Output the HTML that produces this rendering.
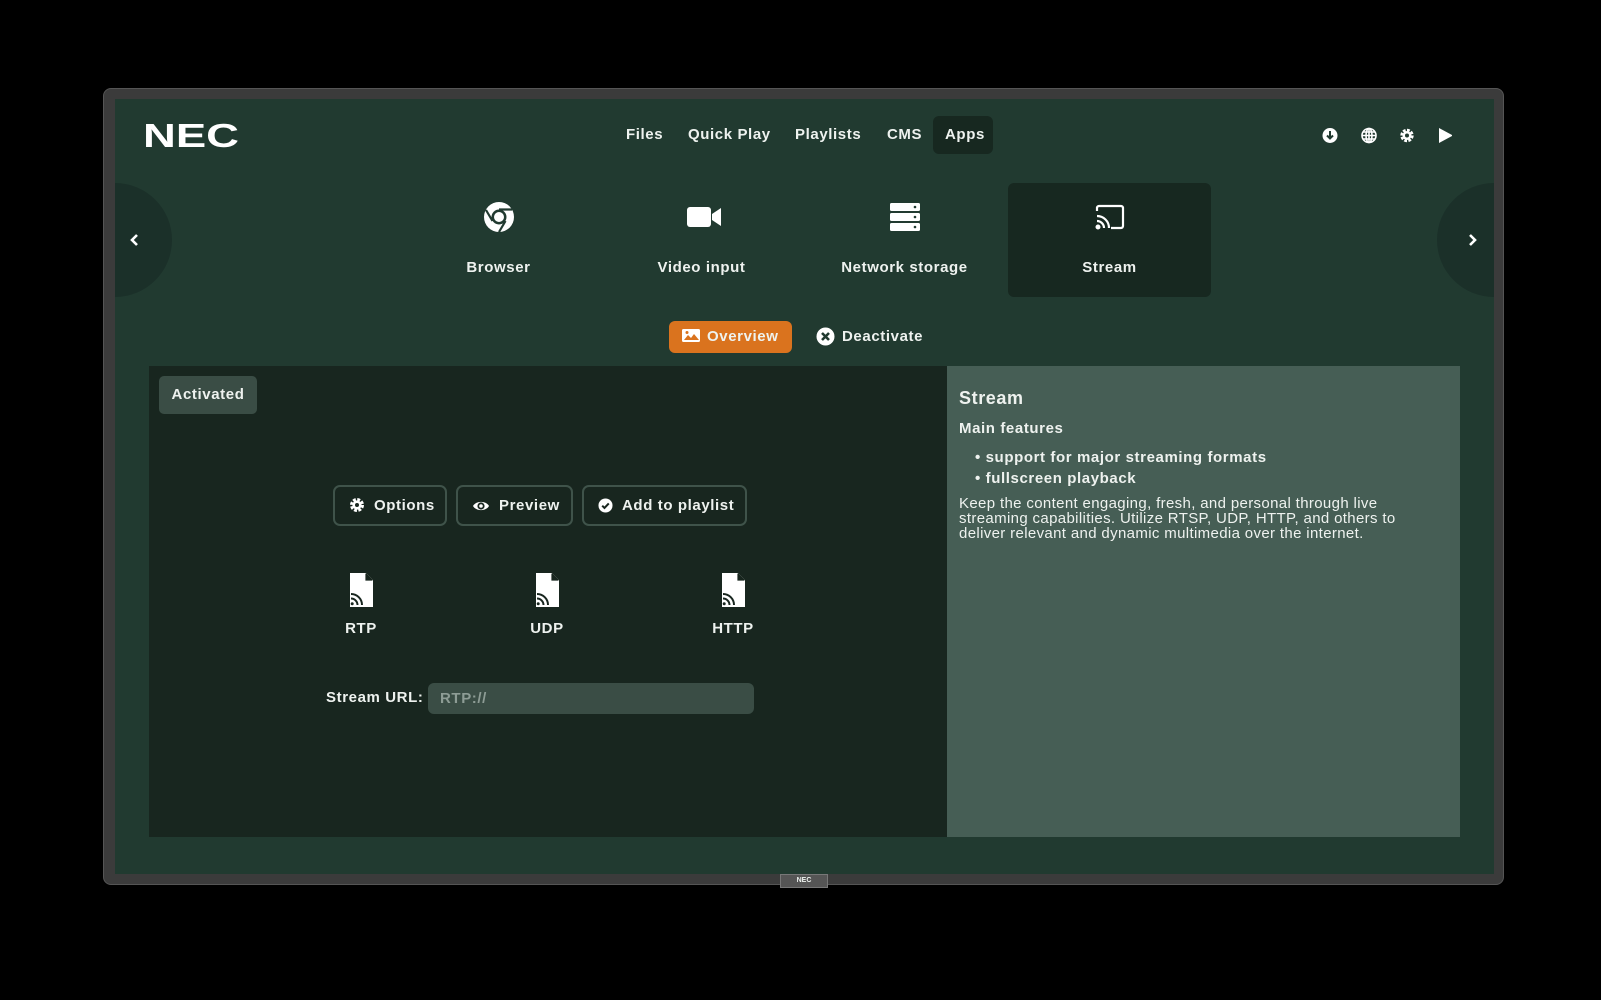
<!DOCTYPE html>
<html><head><meta charset="utf-8"><style>
*{margin:0;padding:0;box-sizing:border-box}
body{width:1601px;height:1000px;background:#000;position:relative;overflow:hidden;font-family:"Liberation Sans",sans-serif;color:#eef2ef;font-weight:bold;letter-spacing:.6px}
.abs{position:absolute}
#frame{left:103px;top:88px;width:1401px;height:797px;background:#3b3b3b;border-radius:8px;border:1px solid #555}
#screen{left:115px;top:99px;width:1379px;height:775px;background:#213a30;overflow:hidden}
.nav{top:124px;font-size:15px;height:22px;line-height:22px}
.circ{width:114px;height:114px;border-radius:50%;background:#1b3029;top:84px;position:absolute}
.tile{top:183px;width:203px;height:114px;text-align:center;border-radius:6px}
.tile svg{position:absolute;left:86px;top:18px}
.tile span{position:absolute;left:0;right:0;top:76px;font-size:15px}
.btn{top:485px;height:41px;border:2px solid #3f534a;border-radius:7px;font-size:15px;line-height:37px;padding-left:14px}
.btn svg{vertical-align:-3px;margin-right:9px}
.fi{top:573px;width:60px;text-align:center;font-size:15px}
.fi span{display:block;margin-top:9px}
</style></head><body>
<div id="frame" class="abs"></div>
<div class="abs" style="left:780px;top:874px;width:48px;height:14px;background:#555;border:1px solid #777;font-size:7px;line-height:12px;text-align:center;letter-spacing:0">NEC</div>
<div id="screen" class="abs"><div class="circ" style="left:-57px"></div><div class="circ" style="left:1322px"></div></div>

<svg class="abs" style="left:143px;top:122px" width="98" height="27"><text x="0" y="25" font-family="Liberation Sans" font-weight="bold" font-size="33" fill="#fff" textLength="96" lengthAdjust="spacingAndGlyphs" letter-spacing="0">NEC</text></svg>

<div class="abs nav" style="left:626px">Files</div>
<div class="abs nav" style="left:688px">Quick Play</div>
<div class="abs nav" style="left:795px">Playlists</div>
<div class="abs nav" style="left:887px">CMS</div>
<div class="abs" style="left:933px;top:116px;width:60px;height:38px;background:#172820;border-radius:6px"></div>
<div class="abs nav" style="left:945px">Apps</div>

<svg class="abs" style="left:1322px;top:127px" width="130" height="17" viewBox="0 0 130 17">
<circle cx="8" cy="8.5" r="7.5" fill="#fff"/><path d="M8 4v7M5 8.5l3 3 3-3" stroke="#213a30" stroke-width="2" fill="none"/>
<g transform="translate(47 8.5)" fill="none" stroke="#fff" stroke-width="1.6"><circle r="7"/><ellipse rx="3" ry="7"/><path d="M-7 0h14M-6-3.5h12M-6 3.5h12M0-7v14"/></g>
<g transform="translate(85 8.5)"><circle r="5" fill="none" stroke="#fff" stroke-width="3.4" stroke-dasharray="2.6 1.3"/><circle r="4.5" fill="#fff"/><circle r="2" fill="#213a30"/></g>
<path d="M117 1l14 7.5-14 7.5z" fill="#fff"/>
</svg>

<svg class="abs" style="left:130px;top:233px" width="10" height="14"><path d="M7 2L2 7l5 5" stroke="#fff" stroke-width="2.6" fill="none"/></svg>
<svg class="abs" style="left:1467px;top:233px" width="10" height="14"><path d="M3 2l5 5-5 5" stroke="#fff" stroke-width="2.6" fill="none"/></svg>

<div class="abs tile" style="left:397px"><svg width="32" height="32" viewBox="0 0 32 32"><circle cx="16" cy="16" r="15" fill="#fff"/><circle cx="16" cy="16" r="7.5" fill="#213a30"/><circle cx="16" cy="16" r="5" fill="#fff"/><path d="M16 8.5h13M9.5 20L3 9M22.5 20L16 31" stroke="#213a30" stroke-width="2.2"/></svg><span>Browser</span></div>
<div class="abs tile" style="left:600px"><svg width="36" height="32" viewBox="0 0 36 32"><rect x="1" y="6" width="24" height="20" rx="3" fill="#fff"/><path d="M26 13l9-6v18l-9-6z" fill="#fff"/></svg><span>Video input</span></div>
<div class="abs tile" style="left:803px"><svg width="32" height="32" viewBox="0 0 32 32" fill="#fff"><rect x="1" y="2" width="30" height="8" rx="1.5"/><rect x="1" y="12" width="30" height="8" rx="1.5"/><rect x="1" y="22" width="30" height="8" rx="1.5"/><g fill="#213a30"><circle cx="26" cy="6" r="1.3"/><circle cx="26" cy="16" r="1.3"/><circle cx="26" cy="26" r="1.3"/></g></svg><span>Network storage</span></div>
<div class="abs tile" style="left:1008px;background:#172820"><svg width="32" height="32" viewBox="0 0 32 32" fill="none" stroke="#fff" stroke-width="2.2"><path d="M3 10V7a2 2 0 012-2h22a2 2 0 012 2v18a2 2 0 01-2 2H17"/><path d="M3 15a12 12 0 0112 12M3 20a7 7 0 017 7"/><circle cx="4" cy="26" r="1.4" fill="#fff"/></svg><span>Stream</span></div>

<div class="abs" style="left:669px;top:321px;width:123px;height:32px;background:#da731e;border-radius:6px;font-size:15px;line-height:32px;padding-left:12px"><svg width="20" height="15" viewBox="0 0 20 15" style="vertical-align:-2px;margin-right:6px"><rect x="1" y="1" width="18" height="13" rx="1.5" fill="#fff"/><path d="M3 12l4-5 3 3 3-4 5 6z" fill="#da731e"/><circle cx="6" cy="4.5" r="1.5" fill="#da731e"/></svg>Overview</div>
<svg class="abs" style="left:816px;top:327px" width="19" height="19"><circle cx="9.5" cy="9.5" r="9" fill="#fff"/><path d="M6 6l7 7M13 6l-7 7" stroke="#213a30" stroke-width="2.6"/></svg>
<div class="abs" style="left:842px;top:328px;font-size:15px">Deactivate</div>

<div class="abs" style="left:149px;top:366px;width:798px;height:471px;background:#18261f"></div>
<div class="abs" style="left:947px;top:366px;width:513px;height:471px;background:#465e55"></div>

<div class="abs" style="left:159px;top:376px;width:98px;height:38px;background:#3a4d45;border-radius:5px;font-size:15px;line-height:38px;text-align:center">Activated</div>

<div class="abs btn" style="left:333px;width:114px"><svg width="16" height="16" viewBox="-8 -8 16 16"><circle r="5.2" fill="none" stroke="#fff" stroke-width="3.6" stroke-dasharray="2.7 1.4"/><circle r="4.6" fill="#fff"/><circle r="2" fill="#18261f"/></svg>Options</div>
<div class="abs btn" style="left:456px;width:117px"><svg width="18" height="14" viewBox="0 0 18 14"><path d="M1 7C4 1.5 14 1.5 17 7 14 12.5 4 12.5 1 7z" fill="#fff"/><circle cx="9" cy="7" r="3.6" fill="#18261f"/><circle cx="9" cy="7" r="1.8" fill="#fff"/></svg>Preview</div>
<div class="abs btn" style="left:582px;width:165px"><svg width="15" height="15" viewBox="0 0 16 16"><circle cx="8" cy="8" r="7.5" fill="#fff"/><path d="M4.5 8.2l2.4 2.4 4.6-4.8" stroke="#18261f" stroke-width="2.2" fill="none"/></svg>Add to playlist</div>

<svg width="0" height="0" style="position:absolute"><defs><g id="fw"><path d="M1 0h16l7 7v27H1z" fill="#fff"/><path d="M17 0v7h7" fill="#18261f"/><path d="M17 0.5v6.5h6.5" fill="none" stroke="#18261f" stroke-width="1.2"/><path d="M2 21a11 11 0 0111 11M2 25.5a6.5 6.5 0 016.5 6.5" stroke="#18261f" stroke-width="2" fill="none"/><circle cx="3.2" cy="30.8" r="1.5" fill="#18261f"/></g></defs></svg>
<div class="abs fi" style="left:331px"><svg width="25" height="34"><use href="#fw"/></svg><span>RTP</span></div>
<div class="abs fi" style="left:517px"><svg width="25" height="34"><use href="#fw"/></svg><span>UDP</span></div>
<div class="abs fi" style="left:703px"><svg width="25" height="34"><use href="#fw"/></svg><span>HTTP</span></div>

<div class="abs" style="left:326px;top:689px;font-size:15px">Stream URL:</div>
<div class="abs" style="left:428px;top:683px;width:326px;height:31px;background:#3a4d45;border-radius:6px;font-size:15px;line-height:31px;padding-left:12px;color:#8d9c95">RTP://</div>

<div class="abs" style="left:959px;top:388px;font-size:18px">Stream</div>
<div class="abs" style="left:959px;top:420px;font-size:15px">Main features</div>
<div class="abs" style="left:975px;top:447px;font-size:15px;line-height:21px">• support for major streaming formats<br>• fullscreen playback</div>
<div class="abs" style="left:959px;top:496px;width:480px;font-size:15px;line-height:15px;font-weight:normal;letter-spacing:.35px">Keep the content engaging, fresh, and personal through live streaming capabilities. Utilize RTSP, UDP, HTTP, and others to deliver relevant and dynamic multimedia over the internet.</div>
</body></html>
